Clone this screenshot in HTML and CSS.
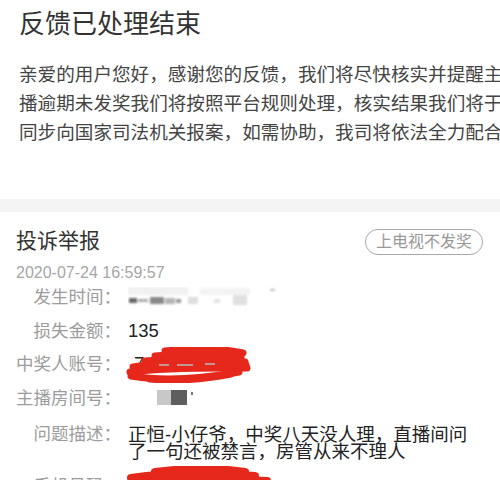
FILE: index.html
```html
<!DOCTYPE html>
<html lang="zh-CN">
<head>
  <meta charset="UTF-8">
  <meta name="viewport" content="width=device-width, initial-scale=1.0">
  <title>反馈已处理结束</title>
  <link rel="stylesheet" href="styles.css">
</head>
<body>
  <div class="notice">
    <h1 class="notice-title">反馈已处理结束</h1>
    <p class="notice-text">亲爱的用户您好，感谢您的反馈，我们将尽快核实并提醒主播逾期未发奖我们将按照平台规则处理，核实结果我们将于同步向国家司法机关报案，如需协助，我司将依法全力配合</p>
  </div>

  <div class="divider"></div>

  <div class="card">
    <div class="card-head">
      <h2 class="card-title">投诉举报</h2>
      <span class="tag">上电视不发奖</span>
    </div>
    <div class="card-date">2020-07-24 16:59:57</div>

    <div class="rows">
      <div class="row">
        <span class="label">发生时间：</span>
        <span class="value">
          <!-- 打码的时间 -->
          <svg width="160" height="20" viewBox="0 0 160 20">
            <defs><filter id="blur1"><feGaussianBlur stdDeviation="1.3"/></filter></defs>
            <g filter="url(#blur1)">
              <rect x="0" y="0" width="60" height="8" fill="#f1f1f1"/>
              <rect x="72" y="1" width="50" height="7" fill="#f3f3f3"/>
              <rect x="1" y="11" width="8" height="5" fill="#666"/>
              <rect x="10" y="12" width="10" height="3" fill="#aaa"/>
              <rect x="22" y="10" width="14" height="7" fill="#888"/>
              <rect x="37" y="11" width="10" height="6" fill="#b5b5b5"/>
              <rect x="48" y="12" width="5" height="4" fill="#999"/>
              <rect x="60" y="10" width="10" height="7" fill="#dedede"/>
              <rect x="86" y="12" width="6" height="4" fill="#e2e2e2"/>
              <rect x="105" y="8" width="14" height="10" fill="#e0e0e0"/>
              <rect x="142" y="2" width="5" height="2" fill="#bbb"/>
            </g>
          </svg>
        </span>
      </div>
      <div class="row">
        <span class="label">损失金额：</span>
        <span class="value">135</span>
      </div>
      <div class="row">
        <span class="label">中奖人账号：</span>
        <span class="value masked">7
          <svg class="scribble scribble-account" width="126" height="36" viewBox="0 0 126 36">
            <g fill="none" stroke="#e5281b" stroke-width="7" stroke-linecap="round">
              <path d="M40 4 C70 1, 100 2, 118 6"/>
              <path d="M30 9 C60 6, 95 6, 116 11"/>
              <path d="M20 14 C55 11, 95 11, 120 15"/>
              <path d="M8 20 C40 15, 80 14, 121 18"/>
              <path d="M5 25 C45 20, 90 21, 122 21"/>
              <path d="M6 29 C35 34, 75 32, 114 25"/>
              <path d="M25 32 C55 35, 85 31, 106 27"/>
            </g>
            <g stroke="#bbb" stroke-width="1.5">
              <path d="M34 18 H44 M52 18 H68 M80 17 H90"/>
            </g>
          </svg>
        </span>
      </div>
      <div class="row">
        <span class="label">主播房间号：</span>
        <span class="value pixels">
          <span class="px px-light"></span>
          <span class="px px-dark"></span>
          <span class="px-dot"></span>
        </span>
      </div>
      <div class="row row-desc">
        <span class="label">问题描述：</span>
        <span class="value">正恒-小仔爷，中奖八天没人理，直播间问了一句还被禁言，房管从来不理人</span>
      </div>
      <div class="row row-phone">
        <span class="label">手机号码：</span>
        <span class="value masked">
          <svg class="scribble scribble-phone" width="150" height="26" viewBox="0 0 150 26">
            <g fill="none" stroke="#e5281b" stroke-width="8" stroke-linecap="round">
              <path d="M30 6 C60 2, 95 2, 120 6"/>
              <path d="M6 12 C40 7, 80 6, 130 10"/>
              <path d="M4 18 C50 13, 100 13, 142 15"/>
              <path d="M8 24 C60 21, 110 21, 145 23"/>
            </g>
          </svg>
        </span>
      </div>
    </div>
  </div>
</body>
</html>
```

FILE: styles.css
```css
body {
  margin: 0;
  font-family: "Liberation Sans", "Noto Sans CJK SC", sans-serif;
  background-color: #fff;
  color: #333;
  overflow: hidden;
}

.notice {
  padding: 7px 0 52px 19px;
  overflow: hidden;
}

.notice-title {
  margin: 0;
  font-size: 26px;
  line-height: 34px;
  font-weight: normal;
  color: #333;
}

.notice-text {
  width: 490px;
  margin: 19px 0 0;
  font-size: 18.6px;
  line-height: 29px;
  color: #444;
}

.divider {
  height: 13px;
  background-color: #f4f4f4;
}

.card {
  padding: 17px 17px 0 16px;
}

.card-head {
  display: flex;
  justify-content: space-between;
  align-items: flex-start;
}

.card-title {
  margin: 0;
  font-size: 21px;
  line-height: 23px;
  font-weight: normal;
  color: #333;
}

.tag {
  height: 26px;
  box-sizing: border-box;
  padding: 0 10px;
  border: 1.5px solid #a8a8a8;
  border-radius: 13px;
  font-size: 16px;
  line-height: 23px;
  color: #999;
}

.card-date {
  margin-top: 8px;
  font-size: 16px;
  line-height: 20px;
  color: #a6a6a6;
}

.rows {
  display: flex;
  flex-direction: column;
  gap: 13.5px;
  margin-top: 4px;
}

.row {
  display: flex;
  align-items: flex-start;
  line-height: 20px;
}

.label {
  flex: none;
  width: 105px;
  text-align: right;
  font-size: 17.5px;
  color: #9c9c9c;
}

.value {
  margin-left: 7px;
  font-size: 18.5px;
  color: #222;
}

.value svg {
  display: block;
}

.masked {
  position: relative;
  min-width: 120px;
  height: 20px;
  padding-left: 6px;
}

.scribble {
  position: absolute;
  left: -3px;
}

.value .scribble {
  display: block;
}

.scribble-account {
  top: -7px;
}

.scribble-phone {
  top: -10px;
}

.pixels {
  display: flex;
  align-items: center;
  height: 20px;
  padding-left: 29px;
}

.px {
  width: 14px;
  height: 15px;
}

.px-light {
  background-color: #c8c8c8;
}

.px-dark {
  width: 16px;
  background-color: #5e5e5e;
}

.px-dot {
  align-self: flex-start;
  width: 2px;
  height: 3px;
  margin: 4px 0 0 4px;
  background-color: #777;
}

.row-desc {
  margin-top: 4.5px;
  line-height: 17.5px;
}

.row-desc .value {
  width: 345px;
}

.row-phone {
  margin-top: 1.5px;
}
```
